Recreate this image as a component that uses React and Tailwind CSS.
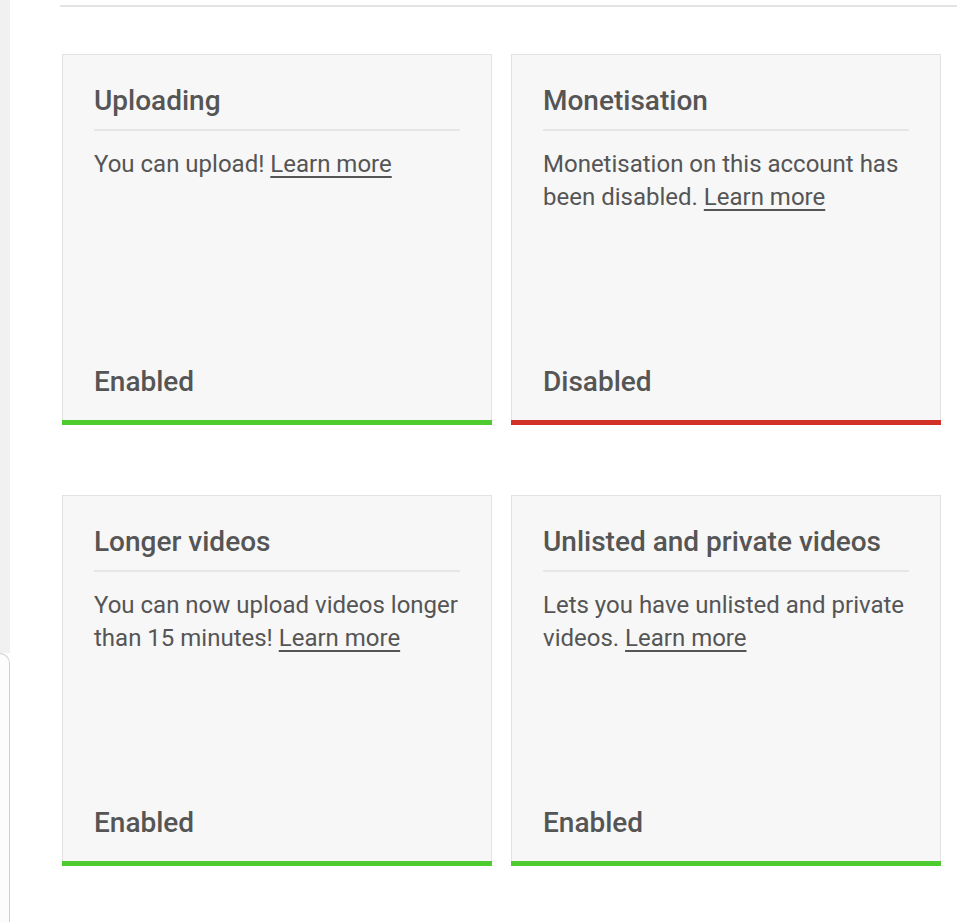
const CARDS = [
  {
    title: "Uploading",
    body: "You can upload!",
    status: "Enabled",
    ok: true,
  },
  {
    title: "Monetisation",
    body: "Monetisation on this account has been disabled.",
    status: "Disabled",
    ok: false,
  },
  {
    title: "Longer videos",
    body: "You can now upload videos longer than 15 minutes!",
    status: "Enabled",
    ok: true,
  },
  {
    title: "Unlisted and private videos",
    body: "Lets you have unlisted and private videos.",
    status: "Enabled",
    ok: true,
  },
];

function FeatureCard({ title, body, status, ok }) {
  return (
    <div className="flex flex-col h-[371px] bg-[#f7f7f7] border border-b-0 border-[#e2e2e2]">
      <div className="flex-1 flex flex-col px-[31px] pt-[28px]">
        <h3 className="text-[28px] leading-[36px] font-medium text-[#555555] pb-[10px] border-b-2 border-[#e6e6e6] whitespace-nowrap">
          {title}
        </h3>
        <p className="mt-[17px] -mr-[8px] text-[24px] leading-[33px] text-[#555555]">
          {body}{" "}
          <a href="#" className="underline underline-offset-[4px] decoration-[1.5px]">
            Learn more
          </a>
        </p>
        <div className="mt-auto pb-[20px] text-[28px] leading-[36px] font-medium text-[#555555]">
          {status}
        </div>
      </div>
      <div className={ok ? "h-[5px] -mx-px bg-[#4ecb2f]" : "h-[5px] -mx-px bg-[#d13127]"} />
    </div>
  );
}

export default function App() {
  return (
    <div
      className="flex w-[957px] h-[922px] bg-white overflow-hidden"
      style={{ fontFamily: "Roboto, 'Noto Sans', sans-serif" }}
    >
      <div className="w-[10px] shrink-0 flex flex-col">
        <div className="h-[653px] bg-[#f1f1f1]" />
        <div className="flex-1 bg-[#fcfcfc] border-t border-r border-[#cfcfcf] rounded-tr-[10px]" />
      </div>
      <div className="flex-1 pl-[50px]">
        <div className="h-[7px] border-b-2 border-[#e4e4e4]" />
        <div className="grid grid-cols-[430px_430px] gap-x-[19px] gap-y-[70px] pl-[2px] pt-[47px]">
          {CARDS.map((c) => (
            <FeatureCard key={c.title} {...c} />
          ))}
        </div>
      </div>
    </div>
  );
}
